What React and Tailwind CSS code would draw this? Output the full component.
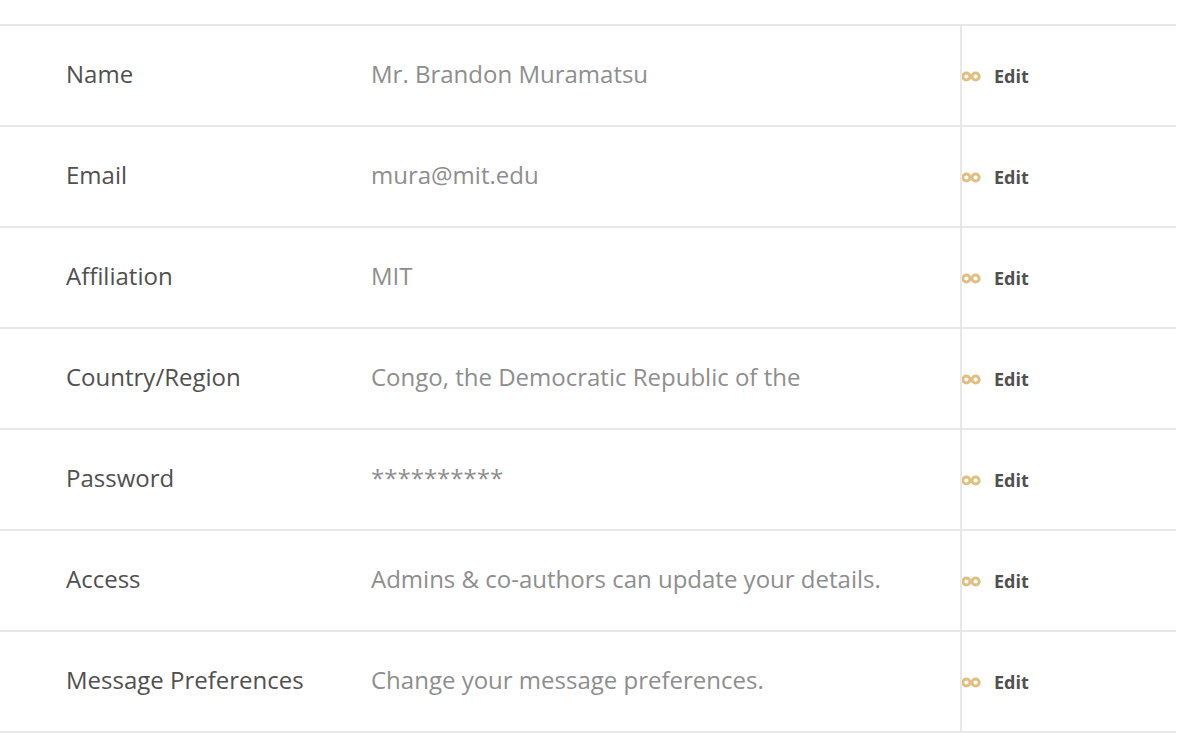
import React from 'react';

const DETAILS = [
  { label: 'Name', value: 'Mr. Brandon Muramatsu' },
  { label: 'Email', value: 'mura@mit.edu' },
  { label: 'Affiliation', value: 'MIT' },
  { label: 'Country/Region', value: 'Congo, the Democratic Republic of the' },
  { label: 'Password', value: '**********' },
  { label: 'Access', value: 'Admins & co-authors can update your details.' },
  { label: 'Message Preferences', value: 'Change your message preferences.' }
];

/**
 * Two linked rings shown in front of each edit action
 */
function LinkIcon() {
  return (
    <svg
      className="h-3 w-5 shrink-0"
      viewBox="0 0 20 12"
      fill="none"
      stroke="#e0c080"
      strokeWidth="3"
      aria-hidden="true"
    >
      <circle cx="4.4" cy="6.5" r="3.6" />
      <circle cx="13.6" cy="6.5" r="3.6" />
      <path d="M7.6 6.5h2.8" />
    </svg>
  );
}

function DetailRow({ label, value }) {
  return (
    <tr className="h-[101px]">
      <th
        scope="row"
        className="border-b-2 border-[#e8e8e8] pb-1 pl-[66px] text-left font-normal text-[#505050]"
      >
        {label}
      </th>
      <td className="border-b-2 border-[#e8e8e8] pb-1 text-[#8e8e8e]">{value}</td>
      <td className="border-b-2 border-l-2 border-[#e8e8e8]">
        <button
          type="button"
          aria-label={`Edit ${label}`}
          className="flex cursor-pointer items-center gap-3 text-lg font-bold text-[#505050]"
        >
          <LinkIcon />
          Edit
        </button>
      </td>
    </tr>
  );
}

export default function App() {
  return (
    <main className="min-h-screen bg-white pt-6 pr-6 font-['Open_Sans',sans-serif]">
      <table className="w-full table-fixed border-separate border-spacing-0 border-t-2 border-[#e8e8e8] text-2xl">
        <colgroup>
          <col className="w-[371px]" />
          <col />
          <col className="w-[216px]" />
        </colgroup>
        <tbody>
          {DETAILS.map((detail) => (
            <DetailRow key={detail.label} label={detail.label} value={detail.value} />
          ))}
        </tbody>
      </table>
    </main>
  );
}
